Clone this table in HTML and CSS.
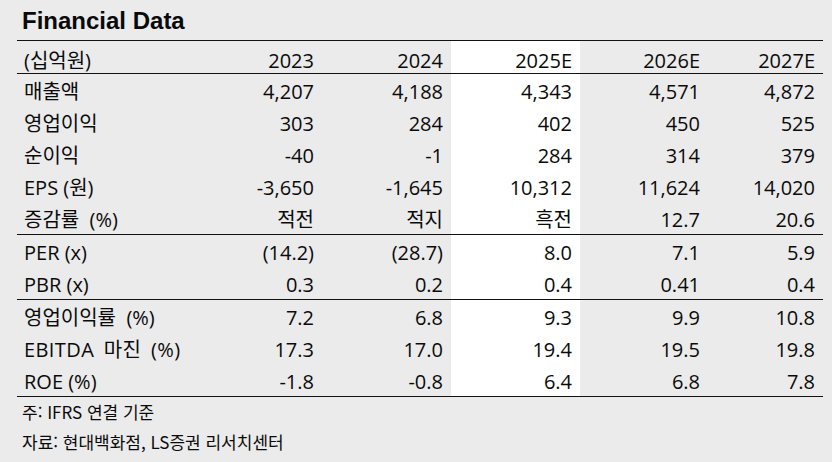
FILE: index.html
```html
<!DOCTYPE html>
<html lang="ko">
<head>
<meta charset="utf-8">
<link rel="stylesheet" href="styles.css">
</head>
<body>
<div class="page">
  <h1 class="title">Financial Data</h1>
  <div class="table">
    <div class="row head sep">
      <div class="cell label">(십억원)</div>
      <div class="cell">2023</div>
      <div class="cell">2024</div>
      <div class="cell hl">2025E</div>
      <div class="cell">2026E</div>
      <div class="cell">2027E</div>
    </div>
    <div class="row">
      <div class="cell label">매출액</div>
      <div class="cell">4,207</div>
      <div class="cell">4,188</div>
      <div class="cell hl">4,343</div>
      <div class="cell">4,571</div>
      <div class="cell">4,872</div>
    </div>
    <div class="row">
      <div class="cell label">영업이익</div>
      <div class="cell">303</div>
      <div class="cell">284</div>
      <div class="cell hl">402</div>
      <div class="cell">450</div>
      <div class="cell">525</div>
    </div>
    <div class="row">
      <div class="cell label">순이익</div>
      <div class="cell">-40</div>
      <div class="cell">-1</div>
      <div class="cell hl">284</div>
      <div class="cell">314</div>
      <div class="cell">379</div>
    </div>
    <div class="row">
      <div class="cell label">EPS (원)</div>
      <div class="cell">-3,650</div>
      <div class="cell">-1,645</div>
      <div class="cell hl">10,312</div>
      <div class="cell">11,624</div>
      <div class="cell">14,020</div>
    </div>
    <div class="row sep">
      <div class="cell label">증감률&nbsp; (%)</div>
      <div class="cell">적전</div>
      <div class="cell">적지</div>
      <div class="cell hl">흑전</div>
      <div class="cell">12.7</div>
      <div class="cell">20.6</div>
    </div>
    <div class="row">
      <div class="cell label">PER (x)</div>
      <div class="cell">(14.2)</div>
      <div class="cell">(28.7)</div>
      <div class="cell hl">8.0</div>
      <div class="cell">7.1</div>
      <div class="cell">5.9</div>
    </div>
    <div class="row sep">
      <div class="cell label">PBR (x)</div>
      <div class="cell">0.3</div>
      <div class="cell">0.2</div>
      <div class="cell hl">0.4</div>
      <div class="cell">0.41</div>
      <div class="cell">0.4</div>
    </div>
    <div class="row">
      <div class="cell label">영업이익률&nbsp; (%)</div>
      <div class="cell">7.2</div>
      <div class="cell">6.8</div>
      <div class="cell hl">9.3</div>
      <div class="cell">9.9</div>
      <div class="cell">10.8</div>
    </div>
    <div class="row">
      <div class="cell label wide">EBITDA 마진 (%)</div>
      <div class="cell">17.3</div>
      <div class="cell">17.0</div>
      <div class="cell hl">19.4</div>
      <div class="cell">19.5</div>
      <div class="cell">19.8</div>
    </div>
    <div class="row sep">
      <div class="cell label">ROE (%)</div>
      <div class="cell">-1.8</div>
      <div class="cell">-0.8</div>
      <div class="cell hl">6.4</div>
      <div class="cell">6.8</div>
      <div class="cell">7.8</div>
    </div>
  </div>
  <div class="notes">
    <p class="note">주: IFRS 연결 기준</p>
    <p class="note">자료: 현대백화점, LS증권 리서치센터</p>
  </div>
</div>
</body>
</html>
```

FILE: styles.css
```css
html, body {
  margin: 0;
  padding: 0;
  background: #ebebeb;
}
body {
  width: 832px;
  height: 462px;
  overflow: hidden;
  color: #0a0a0a;
  font-family: "Open Sans", "Noto Sans CJK KR", sans-serif;
}
.page {
  padding: 0 9px 0 17px;
}
.title {
  margin: 0;
  height: 40px;
  line-height: 42px;
  padding-left: 5px;
  font-family: "Liberation Sans", Arial, sans-serif;
  font-weight: 700;
  font-size: 24px;
  color: #0a0a0a;
}
.table {
  border-top: 1px solid #111;
  width: 806px;
}
.row {
  display: grid;
  grid-template-columns: 176px 129px 129px 129px 128px 115px;
  height: 32px;
}
.row.sep {
  border-bottom: 1px solid #111;
}
.cell {
  display: flex;
  align-items: center;
  justify-content: flex-end;
  padding: 3px 8px 0 0;
  font-size: 20px;
  line-height: 1;
  white-space: nowrap;
}
.head .cell {
  padding-top: 7px;
}
.cell.label {
  justify-content: flex-start;
  padding-left: 7px;
  padding-right: 0;
}
.cell.wide {
  word-spacing: 4px;
  letter-spacing: 0.4px;
}
.cell.hl {
  background: #fff;
}
.notes {
  padding-left: 5px;
}
.note {
  margin: 0;
  height: 30px;
  line-height: 30px;
  font-size: 17px;
  font-family: "Noto Sans CJK KR", sans-serif;
}
```
